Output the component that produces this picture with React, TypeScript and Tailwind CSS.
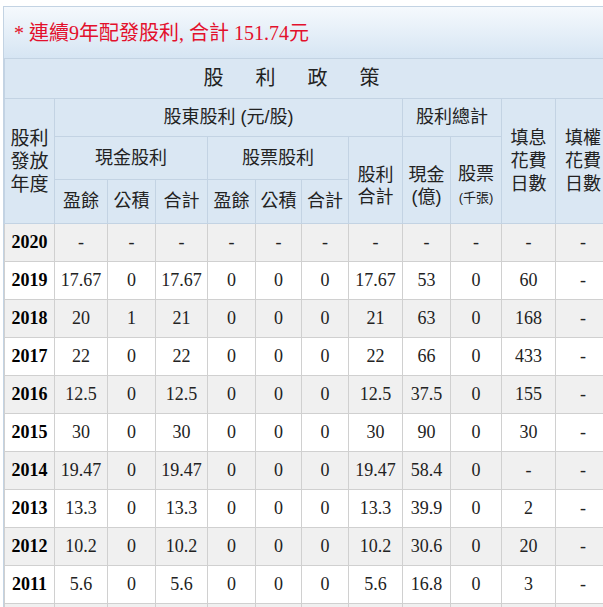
import React from "react";

const rows: string[][] = [
  ["2020","-","-","-","-","-","-","-","-","-","-","-"],
  ["2019","17.67","0","17.67","0","0","0","17.67","53","0","60","-"],
  ["2018","20","1","21","0","0","0","21","63","0","168","-"],
  ["2017","22","0","22","0","0","0","22","66","0","433","-"],
  ["2016","12.5","0","12.5","0","0","0","12.5","37.5","0","155","-"],
  ["2015","30","0","30","0","0","0","30","90","0","30","-"],
  ["2014","19.47","0","19.47","0","0","0","19.47","58.4","0","-","-"],
  ["2013","13.3","0","13.3","0","0","0","13.3","39.9","0","2","-"],
  ["2012","10.2","0","10.2","0","0","0","10.2","30.6","0","20","-"],
  ["2011","5.6","0","5.6","0","0","0","5.6","16.8","0","3","-"],
  ["","","","","","","","","","","",""],
];
const widths = [50, 53, 48, 52, 48, 46, 47, 54, 48, 51, 54, 55];
const cjk = { fontFamily: '"Liberation Sans","Noto Sans CJK TC",sans-serif' };
const serif = { fontFamily: '"Liberation Serif","Noto Sans CJK TC",serif' };
const th = "border border-[#c3d3e3] bg-[#dae7f3] text-[#222] font-normal text-[18px] leading-[21px] p-0 text-center";

export default function App() {
  return (
    <div className="w-[603px] h-[607px] overflow-hidden bg-white pt-[6px] pl-[3px]">
      <div className="w-[606px] border border-[#c3d3e3]">
        <div className="h-[51px] bg-gradient-to-b from-[#f5f9fd] to-[#d6e5f3] flex items-center pl-[10px] text-[#e3102c] text-[20px]" style={serif}>
          * 連續9年配發股利, 合計 151.74元
        </div>
        <table className="border-collapse table-fixed" style={{ width: 606 }}>
          <colgroup>{widths.map((w, i) => <col key={i} style={{ width: w }} />)}</colgroup>
          <thead style={cjk}>
            <tr className="h-[40px]"><th colSpan={12} className={th + " text-[20px] tracking-[1.6em]"}>股利政策</th></tr>
            <tr className="h-[38px]">
              <th rowSpan={3} className={th + " font-bold text-[19px] leading-[23px]"}>股利<br />發放<br />年度</th>
              <th colSpan={7} className={th}>股東股利 (元/股)</th>
              <th colSpan={2} className={th}>股利總計</th>
              <th rowSpan={3} className={th + " leading-[23px]"}>填息<br />花費<br />日數</th>
              <th rowSpan={3} className={th + " leading-[23px]"}>填權<br />花費<br />日數</th>
            </tr>
            <tr className="h-[43px]">
              <th colSpan={3} className={th}>現金股利</th>
              <th colSpan={3} className={th}>股票股利</th>
              <th rowSpan={2} className={th + " leading-[22px] pt-[12px]"}>股利<br />合計</th>
              <th rowSpan={2} className={th + " leading-[22px] pt-[12px]"}>現金<br />(億)</th>
              <th rowSpan={2} className={th + " leading-[22px] pt-[12px]"}>股票<br /><span className="text-[13px]">(千張)</span></th>
            </tr>
            <tr className="h-[44px]">
              {["盈餘","公積","合計","盈餘","公積","合計"].map((t, i) => <th key={i} className={th}>{t}</th>)}
            </tr>
          </thead>
          <tbody style={serif}>
            {rows.map((r, ri) => (
              <tr key={ri} className={"h-[38px] " + (ri % 2 === 0 ? "bg-[#f0f0f0]" : "bg-white")}>
                {r.map((c, ci) => (
                  <td key={ci} className={"border border-[#d0d0d0] text-center text-[#222] p-0 " + (ci === 0 ? "font-bold text-[18px] text-black" : "text-[18px]")}>{c}</td>
                ))}
              </tr>
            ))}
          </tbody>
        </table>
      </div>
    </div>
  );
}
